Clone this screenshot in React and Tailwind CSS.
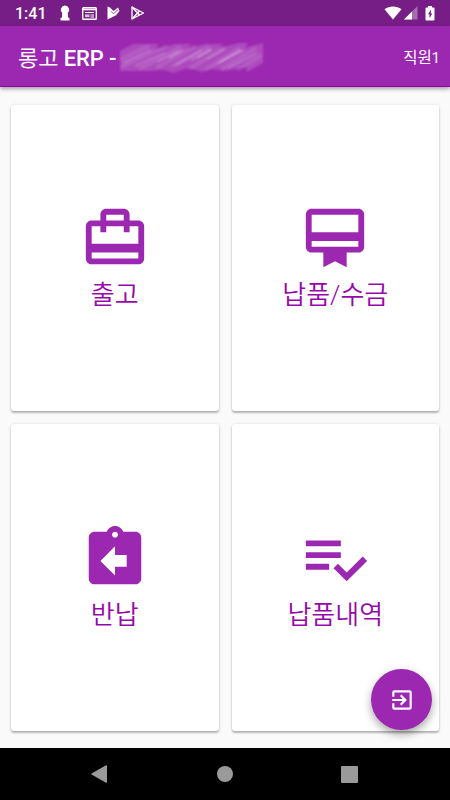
import React from 'react';
import { MdCardTravel, MdCardMembership, MdAssignmentReturn, MdExitToApp } from 'react-icons/md';

const PlaylistCheckIcon = ({ className }) => (
  <svg viewBox="0 0 24 24" fill="currentColor" className={className}>
    <path d="M14 10H2v2h12v-2zm0-4H2v2h12V6zM2 16h8v-2H2v2zm19.5-4.5L23 13l-6.99 7-4.51-4.5L13 14l3.01 3 5.49-5.5z" />
  </svg>
);

const menuItems = [
  { label: '출고', icon: MdCardTravel },
  { label: '납품/수금', icon: MdCardMembership },
  { label: '반납', icon: MdAssignmentReturn },
  { label: '납품내역', icon: PlaylistCheckIcon },
];

const StatusBar = () => (
  <div className="flex h-[26px] shrink-0 items-center bg-[#771e86] pl-[15px] pr-[15px] text-white">
    <span className="w-[31px] whitespace-nowrap pt-[2px] text-[16px] font-medium leading-6">1:41</span>
    {/* notification icons */}
    <svg width="10" height="16" viewBox="0 0 10 16" fill="currentColor" className="ml-[14px]">
      <path d="M5 .5a4.200 4.200 0 0 1 2.800 7.300L8 12.500l1.500.5v2.500H.5V13l1.500-.5.2-4.700A4.200 4.200 0 0 1 5 .5z" />
    </svg>
    <svg width="15" height="13" viewBox="0 0 15 13" fill="none" stroke="currentColor" className="ml-[12px]">
      <rect x=".7" y=".7" width="13.600" height="11.600" rx=".8" strokeWidth="1.400" />
      <path d="M1 2.500h13" strokeWidth="1.600" />
      <path d="M3 5.500h9M8.500 8h3.500M8.500 10h3.500" strokeWidth="1" />
      <path d="M3 8.800h4.500" strokeWidth="2.800" opacity=".7" />
    </svg>
    <svg width="13" height="14" viewBox="0 0 13 14" fill="currentColor" className="ml-[10px]">
      <path d="M.5.5 3 1.500 6.500 5l4.500-3.500L12.500 5 9 9.300.5 13.500z" />
      <path d="m4 5.200 2.500 2.500 4.500-4" fill="none" stroke="#771e86" strokeWidth=".8" />
    </svg>
    <svg width="14" height="14" viewBox="0 0 14 14" fill="none" stroke="currentColor" className="ml-[11px]">
      <path d="M1 1 12.500 7 1 13z" strokeWidth="1.300" strokeLinejoin="round" />
      <path d="m1 1 7.500 8M1 13l7.500-8" strokeWidth="1.500" />
    </svg>
    {/* wifi, signal and battery */}
    <svg width="18" height="14" viewBox="0 0 18 14" fill="currentColor" className="ml-auto">
      <path d="M9 13.500.5 3.200C5.500-.4 12.500-.4 17.500 3.200z" />
    </svg>
    <svg width="14" height="14" viewBox="0 0 14 14" fill="currentColor" className="ml-[2px]">
      <path d="M0 13.500 13.500 0v13.500z" opacity=".35" />
      <path d="M0 13.500 8 5.500v8z" />
    </svg>
    <svg width="10" height="15" viewBox="0 0 10 15" fill="currentColor" className="ml-[7px]">
      <path d="M3 0h4v1.500h1.500q1 0 1 1v11q0 1-1 1h-7q-1 0-1-1v-11q0-1 1-1H3z" />
      <path d="M6 3.500 3 8.300h1.500v4L7.300 7.500H5.800z" fill="#771e86" />
    </svg>
  </div>
);

// the customer name stays hidden behind a smudge
const HiddenName = () => (
  <svg width="146" height="32" viewBox="0 0 146 32" className="ml-[3px] mt-[4px] shrink-0">
    <defs>
      <filter id="smudge" x="-5%" y="-10%" width="110%" height="120%">
        <feGaussianBlur stdDeviation="0.8" />
      </filter>
    </defs>
    <g filter="url(#smudge)" stroke="#fff" fill="none">
      <path d="M1 9 14 2h26l-4 5 20-5h17l-5 4 19-4h17l-4 4 20-5h9l-3 5 18-5v20l-16 9-1-5-22 4-13-2-9 3-14-4-15 5-9-3-14 1H1z" fill="#fff" fillOpacity=".17" stroke="none" />
      <path d="M1 18 30 4M2 25 48 4M20 27 62 5M37 26 77 4M53 24 90 5M70 27 106 5M86 28 121 6M102 27 137 6M118 28 143 13" strokeWidth="4" opacity=".1" />
      <path d="M4 21 32 8M16 24 46 11M38 20 60 9M57 23 83 8M72 18 93 7M88 17 106 7M98 22 125 8M109 26 138 11" strokeWidth="1.800" opacity=".24" />
      <path d="M50 16 64 8M78 16 92 8M101 20 122 8" strokeWidth="1.400" opacity=".4" />
    </g>
  </svg>
);

const AppBar = () => (
  <header className="relative flex h-[61px] shrink-0 items-center border-b border-[#9400a8] bg-[#9c27b0] pl-[18px] pr-[10px] text-white shadow-[0_2px_4px_rgba(0,0,0,0.35)]">
    <h1 className="whitespace-nowrap pt-[6px] text-[22px] font-medium leading-8 tracking-[-0.1px]">
      <span className="font-normal">롱고</span> ERP -
    </h1>
    <HiddenName />
    <span className="ml-auto whitespace-nowrap pt-[6px] text-[15.5px] tracking-[-0.2px]">직원1</span>
  </header>
);

const MenuCard = ({ label, icon: Icon }) => (
  <button className="flex flex-col items-center justify-center rounded-[3px] bg-white text-[#9c27b0] shadow-[0_2px_2px_rgba(0,0,0,0.25),0_0_3px_rgba(0,0,0,0.12)]">
    <Icon className="h-[70px] w-[70px]" />
    <span className="mt-1 whitespace-nowrap text-[26px] font-[350] leading-9 text-[#9608aa]">{label}</span>
  </button>
);

const NavigationBar = () => (
  <nav className="flex h-[52px] shrink-0 items-center justify-between bg-black pl-[91px] pr-[92px] text-[#9a9a9a]">
    <svg width="16" height="18" viewBox="0 0 16 18" fill="currentColor">
      <path d="M15 .3q1-.5 1 .5v16.400q0 1-1 .5L.6 9.500q-.8-.5 0-1z" />
    </svg>
    <span className="ml-px h-4 w-4 rounded-full bg-[#9a9a9a]" />
    <span className="h-[17px] w-[17px] rounded-[1px] bg-[#9a9a9a]" />
  </nav>
);

const App = () => {
  return (
    <div className="relative flex h-[800px] w-[450px] flex-col overflow-hidden bg-[#fafafa] font-['Roboto','Noto_Sans_CJK_KR',sans-serif]">
      <StatusBar />
      <AppBar />
      <main className="grid flex-1 grid-cols-2 grid-rows-[306px_307px] gap-[13px] px-[11px] pb-[17px] pt-[18px]">
        {menuItems.map((item) => (
          <MenuCard key={item.label} label={item.label} icon={item.icon} />
        ))}
      </main>
      <NavigationBar />
      <button className="absolute bottom-[70px] right-[18px] flex h-[61px] w-[61px] items-center justify-center rounded-full bg-[#9c27b0] text-white shadow-[0_4px_8px_rgba(0,0,0,0.35)]">
        <MdExitToApp className="h-[26px] w-[26px]" />
      </button>
    </div>
  );
};

export default App;
